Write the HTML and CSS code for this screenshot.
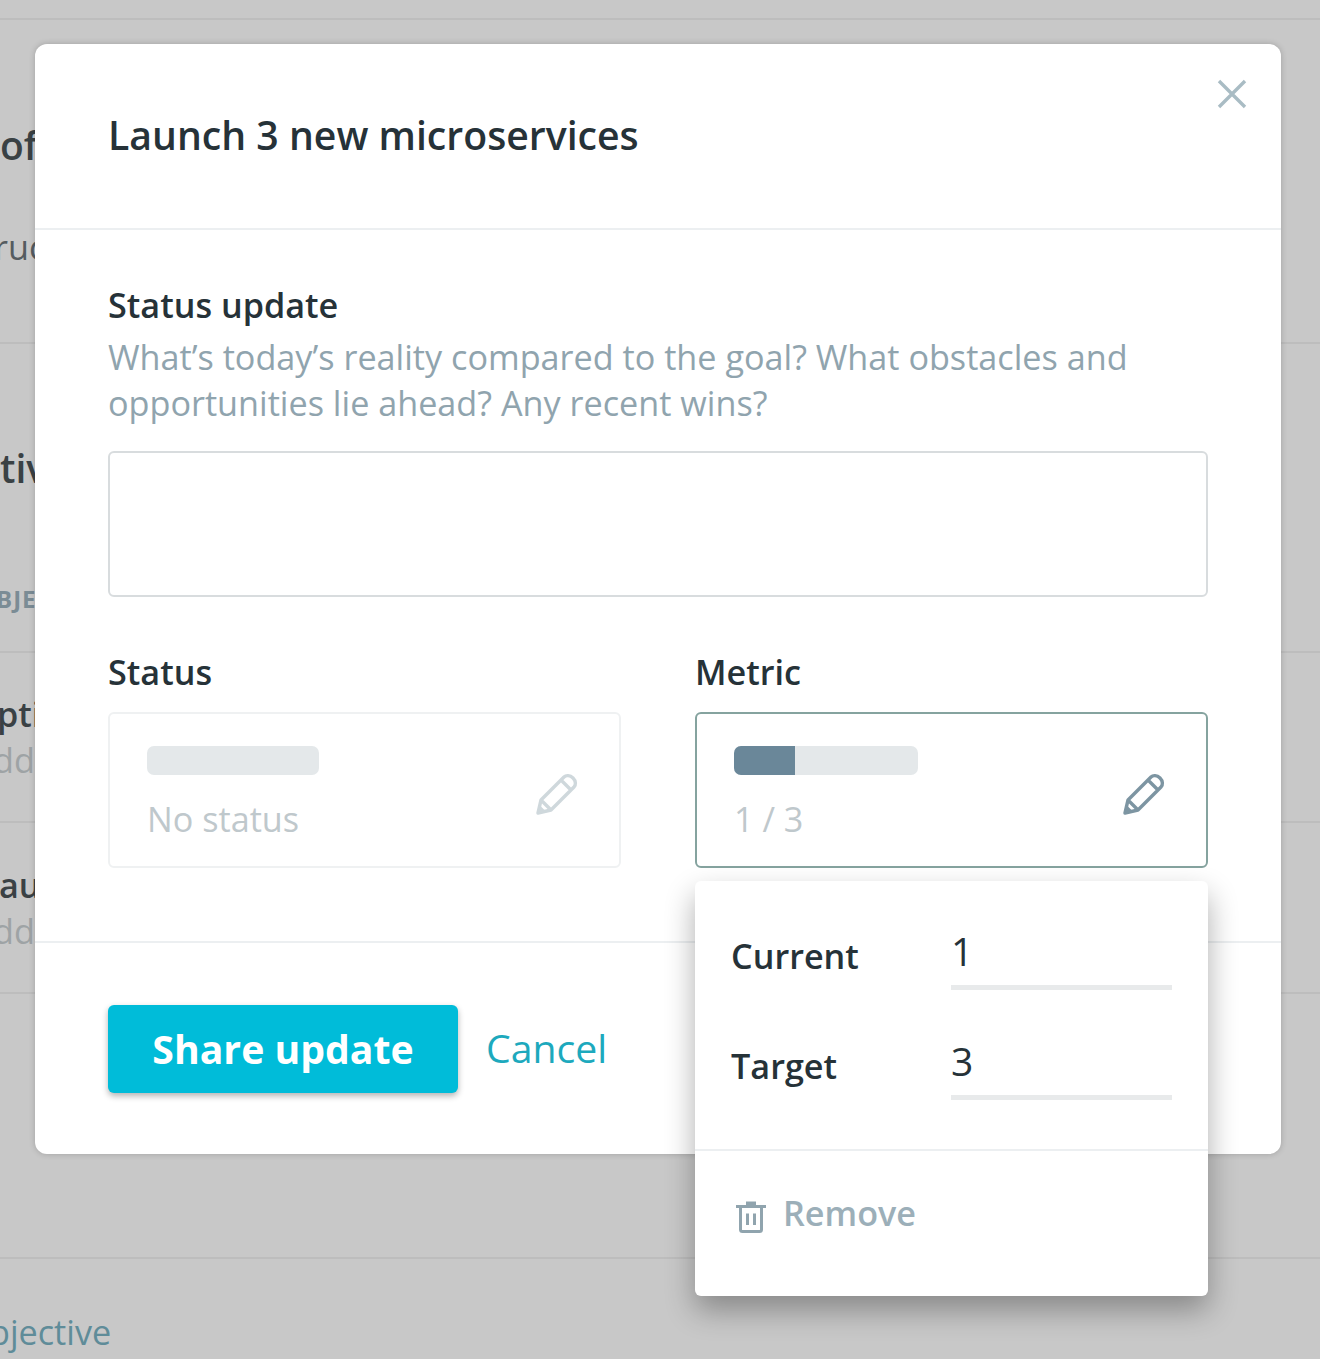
FILE: index.html
```html
<!DOCTYPE html>
<html>
<head>
  <meta charset="UTF-8">
  <title>Status update</title>
  <link rel="stylesheet" href="styles.css">
</head>
<body>
  <div class="page">
    <div class="page-row row-a"></div>
    <div class="page-row row-b">
      <div class="bg-title">of</div>
      <div class="bg-text">ruct</div>
    </div>
    <div class="page-row row-c">
      <div class="bg-title">tiv</div>
      <div class="bg-label">BJEC</div>
    </div>
    <div class="page-row row-d">
      <div class="bg-name bg-pti">pti</div>
      <div class="bg-muted">dd</div>
    </div>
    <div class="page-row row-e">
      <div class="bg-name bg-au">aun</div>
      <div class="bg-muted">dd</div>
    </div>
    <div class="page-row row-f"></div>
    <div class="bg-link">bjective</div>
  </div>

  <div class="modal">
    <div class="modal-head">
      <h1>Launch 3 new microservices</h1>
      <svg class="close" width="30" height="30" viewBox="0 0 30 30">
        <path d="M2 2L28 28M28 2L2 28" fill="none" stroke="#a9bcc4" stroke-width="3.4"/>
      </svg>
    </div>

    <div class="modal-body">
      <div class="label">Status update</div>
      <p class="hint">What’s today’s reality compared to the goal? What obstacles and opportunities lie ahead? Any recent wins?</p>
      <div class="textarea"></div>

      <div class="fields">
        <div class="field">
          <div class="label">Status</div>
          <div class="card card-off">
            <div class="card-info">
              <div class="bar bar-status"></div>
              <div class="card-text">No status</div>
            </div>
            <svg class="pencil" width="44" height="44" viewBox="0 0 44 44">
              <path d="M3 41L6 28L29 5C31 3 35 3 38 6C41 9 41 13 39 15L16 38ZM6 28L16 38M26 8L36 18" fill="none" stroke="#cfd8dc" stroke-width="3.4" stroke-linejoin="round"/>
              <path d="M3 41L4.500 33L11 39.500Z" fill="#cfd8dc"/>
            </svg>
          </div>
        </div>
        <div class="field">
          <div class="label">Metric</div>
          <div class="card card-on">
            <div class="card-info">
              <div class="bar bar-metric"><div class="bar-fill"></div></div>
              <div class="card-text">1 / 3</div>
            </div>
            <svg class="pencil" width="44" height="44" viewBox="0 0 44 44">
              <path d="M3 41L6 28L29 5C31 3 35 3 38 6C41 9 41 13 39 15L16 38ZM6 28L16 38M26 8L36 18" fill="none" stroke="#7d95a2" stroke-width="3.4" stroke-linejoin="round"/>
              <path d="M3 41L4.500 33L11 39.500Z" fill="#7d95a2"/>
            </svg>
          </div>
        </div>
      </div>
    </div>

    <div class="modal-foot">
      <button class="share">Share update</button>
      <span class="cancel">Cancel</span>
    </div>
  </div>

  <div class="popover">
    <div class="pop-fields">
      <div class="pop-row">
        <span class="pop-label">Current</span>
        <div class="pop-input">1</div>
      </div>
      <div class="pop-row">
        <span class="pop-label">Target</span>
        <div class="pop-input">3</div>
      </div>
    </div>
    <div class="pop-remove">
      <svg width="30" height="33" viewBox="0 0 30 33">
        <path d="M10 1.500H20V5H10Z" fill="#90a4ae"/>
        <path d="M0 6.500H30M4.500 7V29.500C4.500 30.600 5.400 31.500 6.500 31.500H23.500C24.600 31.500 25.500 30.600 25.500 29.500V7M11.500 13.500V25M18.500 13.500V25" fill="none" stroke="#90a4ae" stroke-width="3"/>
      </svg>
      <span>Remove</span>
    </div>
  </div>
</body>
</html>
```

FILE: styles.css
```css
* {
  box-sizing: border-box;
}
html, body {
  margin: 0;
  height: 100%;
}
body {
  width: 1320px;
  height: 1359px;
  overflow: hidden;
  position: relative;
  background-color: #c8c8c8;
  font-family: "Open Sans", "Noto Sans", sans-serif;
  color: #263238;
}

/* dimmed page behind the modal */
.page {
  height: 1359px;
  overflow: hidden;
}
.page-row {
  border-bottom: 2px solid #bdbdbd;
  overflow: hidden;
  white-space: nowrap;
}
.row-a {
  height: 20px;
}
.row-b {
  height: 324px;
  padding-top: 99px;
}
.row-c {
  height: 309px;
  padding-top: 98px;
}
.row-d {
  height: 170px;
  padding-top: 38px;
}
.row-e {
  height: 171px;
  padding-top: 39px;
}
.row-f {
  height: 265px;
}
.bg-title {
  font-size: 39px;
  font-weight: 600;
  line-height: 52px;
  color: #3a4144;
}
.bg-text {
  margin-top: 54px;
  margin-left: -6px;
  font-size: 34.2px;
  line-height: 44px;
  color: #555c60;
}
.bg-label {
  margin-top: 89px;
  margin-left: -4px;
  font-size: 24px;
  font-weight: 700;
  line-height: 32px;
  letter-spacing: 1px;
  color: #7b8c95;
}
.bg-name {
  font-size: 34.2px;
  font-weight: 600;
  line-height: 46px;
  color: #3a4144;
}
.bg-pti {
  margin-left: -3px;
}
.bg-au {
  margin-left: -1px;
}
.bg-muted {
  margin-left: -7px;
  font-size: 34.2px;
  line-height: 46px;
  color: #9ea3a5;
}
.bg-link {
  margin-top: 50px;
  margin-left: -11px;
  font-size: 34.2px;
  line-height: 46px;
  white-space: nowrap;
  color: #5f8c99;
}

/* modal */
.modal {
  position: absolute;
  left: 35px;
  top: 44px;
  width: 1246px;
  height: 1110px;
  background-color: white;
  border-radius: 12px;
  box-shadow: 0 0 6px rgba(0,0,0,0.2);
}
.modal-head {
  position: relative;
  height: 186px;
  padding: 65px 73px 0;
  border-bottom: 2px solid #eceff1;
}
.modal-head h1 {
  margin: 0;
  font-size: 39.2px;
  font-weight: 600;
  line-height: 52px;
  color: #263238;
}
.close {
  position: absolute;
  right: 34px;
  top: 35px;
}
.modal-body {
  height: 713px;
  padding: 52px 73px 0;
  border-bottom: 2px solid #eceff1;
}
.label {
  font-size: 34.2px;
  font-weight: 600;
  line-height: 46px;
  color: #263238;
}
.hint {
  margin: 6px 0 0;
  font-size: 34.2px;
  line-height: 46px;
  color: #90a4ae;
}
.textarea {
  height: 146px;
  margin-top: 25px;
  border: 2px solid #d8dcde;
  border-radius: 6px;
}
.fields {
  display: flex;
  gap: 74px;
  margin-top: 52px;
}
.field {
  width: 513px;
}
.card {
  display: flex;
  justify-content: space-between;
  align-items: center;
  height: 156px;
  margin-top: 17px;
  padding: 0 40px 0 37px;
  border-radius: 6px;
}
.card-off {
  border: 2px solid #eff1f2;
}
.card-on {
  border: 2px solid #85a39f;
}
.card-info {
  padding-top: 7px;
}
.bar {
  height: 29px;
  border-radius: 7px;
  background-color: #e4e8ea;
  overflow: hidden;
}
.bar-status {
  width: 172px;
}
.bar-metric {
  width: 184px;
}
.bar-fill {
  width: 33.3%;
  height: 100%;
  background-color: #6a8799;
}
.card-text {
  margin-top: 21px;
  font-size: 34.2px;
  line-height: 46px;
  color: #bfc8cc;
}
.pencil {
  margin-top: 8px;
}

.modal-foot {
  display: flex;
  align-items: center;
  gap: 28px;
  padding: 62px 73px 0;
}
.share {
  width: 350px;
  height: 88px;
  padding: 0 0 2px;
  border: none;
  border-radius: 6px;
  background-color: #00bcd9;
  box-shadow: 0 3px 6px rgba(0,0,0,0.3);
  color: white;
  font-family: inherit;
  font-size: 39.2px;
  font-weight: 700;
}
.cancel {
  margin-bottom: 3px;
  font-size: 39.2px;
  color: #1da9bd;
}

/* metric popover */
.popover {
  position: absolute;
  left: 695px;
  top: 881px;
  width: 513px;
  height: 415px;
  background-color: white;
  border-radius: 6px;
  box-shadow: 0 14px 30px rgba(0,0,0,0.32);
}
.pop-fields {
  height: 270px;
  padding: 49px 36px 0 36px;
  border-bottom: 2px solid #eceff1;
}
.pop-row {
  display: flex;
  justify-content: space-between;
  height: 110px;
}
.pop-label {
  font-size: 34.2px;
  font-weight: 600;
  line-height: 52px;
  color: #263238;
}
.pop-input {
  width: 221px;
  height: 60px;
  border-bottom: 5px solid #e8eaeb;
  font-size: 39px;
  line-height: 42px;
  color: #263238;
}
.pop-remove {
  display: flex;
  align-items: center;
  gap: 17px;
  padding: 39px 0 0 41px;
  font-size: 34.2px;
  font-weight: 600;
  line-height: 46px;
  color: #9cafb9;
}
.pop-remove svg {
  margin-top: 6px;
}
```
